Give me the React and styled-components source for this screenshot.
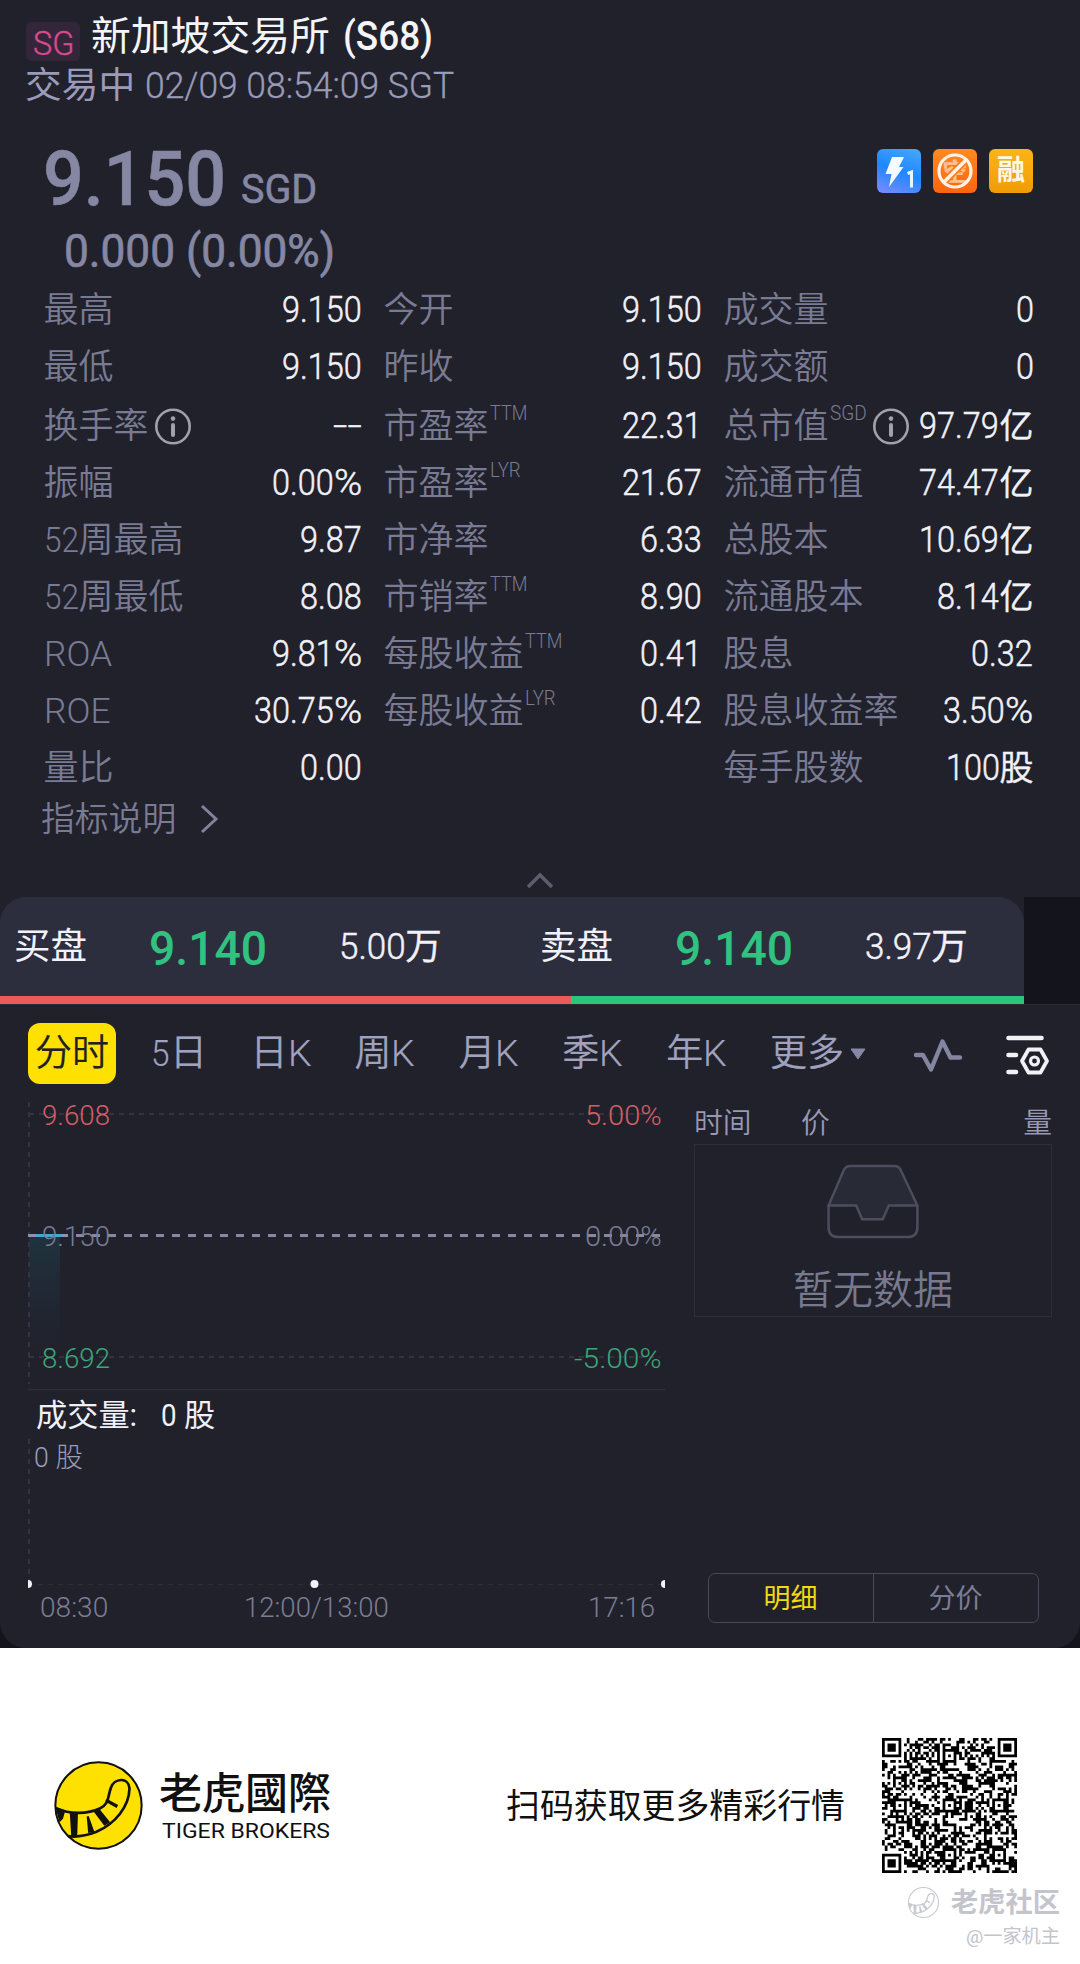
import React, { useLayoutEffect, useRef, useState } from 'react'
import styled, { createGlobalStyle } from 'styled-components'

const GlobalStyle = createGlobalStyle`
  * { box-sizing: border-box; }
  body {
    margin: 0;
    background: #ffffff;
    font-family: Roboto, 'Noto Sans CJK SC', sans-serif;
  }
`

/* ---------- narrow figures ---------- */

const NarrowBox = styled.span`
  display: inline-block;
  white-space: pre;
`
const NarrowInner = styled.span`
  display: inline-block;
  transform-origin: 0 50%;
`

// squeezes text horizontally, by a factor (k) or to a width (w)
const Narrow = ({ k = 0.9, w, className, children }) => {
  const ref = useRef(null)
  const [natural, setNatural] = useState(0)
  useLayoutEffect(() => {
    setNatural(ref.current.offsetWidth)
  }, [children])
  const width = w || natural * k
  const scale = natural ? width / natural : 1
  return (
    <NarrowBox className={className} style={{ width: natural ? width : undefined }}>
      <NarrowInner ref={ref} style={{ transform: `scaleX(${scale})` }}>{children}</NarrowInner>
    </NarrowBox>
  )
}

const factor = part => {
  if (part === '%') return 1.06
  if (part === '--') return 1.4
  if (/[A-Z]/.test(part)) return 1.01
  return 0.9
}

// figures get narrowed, chinese characters stay as they are
const Mixed = ({ text }) =>
  text.split(/(%|[\x20-\x24\x26-\x7e]+)/).filter(Boolean).map((part, i) =>
    /^[\x20-\x7e]+$/.test(part)
      ? <Narrow key={i} k={factor(part)}>{part}</Narrow>
      : <Han key={i}>{part}</Han>
  )

const Han = styled.span``

/* ---------- page ---------- */

const Page = styled.div`
  width: 1080px;
  height: 1964px;
  display: flex;
  flex-direction: column;
  background: #ffffff;
  overflow: hidden;
`
const Dark = styled.div`
  height: 1648px;
  background: #14141d;
`
const Summary = styled.section`
  height: 897px;
  padding-top: 17px;
  background: #21212b;
`
const TitleRow = styled.div`
  height: 40px;
  padding-left: 26px;
  display: flex;
  align-items: center;
  color: #f4f4f9;
  font-size: 39.8px;
  line-height: 40px;
  white-space: pre;
`
const Market = styled.div`
  width: 54px;
  height: 39px;
  margin: 8px 11px 0 0;
  padding-top: 3px;
  border-radius: 5px;
  background: #33253a;
  color: #d74c8a;
  font-size: 34px;
  font-weight: 300;
  -webkit-text-stroke: 0.4px;
  line-height: 37px;
  text-align: center;
`
const Symbol = styled(Narrow)`
  margin-left: 13px;
  font-weight: 500;
`
const Status = styled.div`
  height: 40px;
  margin-top: 8px;
  padding-left: 25px;
  color: #999bb9;
  font-size: 36.7px;
  line-height: 40px;
`
const Clock = styled(Narrow)`
  margin-left: 10px;
  font-size: 37.5px;
  font-weight: 300;
  -webkit-text-stroke: 0.3px;
`
const PriceRow = styled.div`
  height: 76px;
  margin-top: 36px;
  padding: 0 47px 0 43px;
  display: flex;
  justify-content: space-between;
  align-items: flex-start;
`
const Price = styled.div`
  display: flex;
  align-items: baseline;
  gap: 15px;
  color: #8587a3;
  font-size: 76px;
  line-height: 76px;
  font-weight: 500;
  -webkit-text-stroke: 0.6px;
`
const Currency = styled(Narrow)`
  font-size: 40px;
  font-weight: 400;
  transform: translateY(-2px);
`
const Badges = styled.div`
  display: flex;
  gap: 12px;
  margin-top: 8px;
`
const Badge = styled.div`
  width: 44px;
  height: 44px;
  border-radius: 6px;
  display: flex;
  align-items: center;
  justify-content: center;
  background: ${p => p.$bg};
  color: #fff8e6;
  font-size: 28px;
  font-weight: 600;
  line-height: 46px;
`
const Change = styled.div`
  height: 46px;
  margin-top: 11px;
  padding-left: 64px;
  color: #8587a3;
  font-size: 46px;
  font-weight: 400;
  -webkit-text-stroke: 0.7px;
  line-height: 46px;
`

/* ---------- indicators ---------- */

const Stats = styled.div`
  display: grid;
  grid-template-columns: 319px 319px 310px;
  column-gap: 21px;
  grid-auto-rows: 57px;
  margin: 8px 0 0 43.5px;
`
const Stat = styled.div`
  display: flex;
  justify-content: space-between;
  align-items: center;
  line-height: 57px;
  white-space: nowrap;
  transform: translateY(${p => (p.$row > 1 ? 2 : 0)}px);
`
const Label = styled.div`
  display: flex;
  align-items: center;
  color: #797b94;
  font-size: 35px;
  font-weight: 300;
  height: 57px;

  ${Han} {
    font-weight: 350;
  }
`
const Sup = styled(Narrow)`
  margin-left: 1px;
  font-size: 20.5px;
  line-height: 24px;
  margin-bottom: 27px;
`
const Value = styled.div`
  color: #f1f1f8;
  font-size: 36px;
  font-weight: 300;
  -webkit-text-stroke: 0.5px;
  line-height: 57px;

  ${Han} {
    font-size: 34px;
    font-weight: 350;
  }
`
const InfoIcon = styled.svg`
  width: 38px;
  height: 38px;
  margin-left: 5px;
  flex: none;
`
const Explain = styled.div`
  height: 46px;
  margin-top: 2px;
  padding-left: 41px;
  display: flex;
  align-items: center;
  gap: 23px;
  color: #797b94;
  font-size: 33.8px;
  font-weight: 350;
  line-height: 48px;

  svg {
    margin-bottom: 2px;
  }
`
const Fold = styled.div`
  display: flex;
  justify-content: center;
  margin-top: 29px;
`

/* ---------- bid / ask ---------- */

const Quote = styled.section`
  width: 1024px;
  height: 107px;
  background: #21212b;
`
const QuoteInner = styled.div`
  height: 99px;
  display: grid;
  grid-template-columns: 526px 498px;
  background: #2c2e3d;
  border-radius: 26px 26px 0 0;
`
const Side = styled.div`
  padding-left: 14px;
  display: grid;
  grid-template-columns: 135px 190px 1fr;
  line-height: 99px;
  color: #f1f1f8;
  font-size: 36.5px;
`
const SidePrice = styled.div`
  color: #31c280;
  font-size: 49px;
  font-weight: 500;
  line-height: 104px;
`
const SideVolume = styled.div`
  font-weight: 300;
  -webkit-text-stroke: 0.5px;

  ${Han} {
    font-weight: 350;
  }
`
const Ratio = styled.div`
  height: 8px;
  display: flex;
  background: #2bc57b;

  div {
    width: 571px;
    background: #ec5b5b;
  }
`

/* ---------- chart panel ---------- */

const Panel = styled.section`
  height: 644px;
  background: #21212b;
  border-top: 1px solid #2a2a35;
  border-radius: 0 0 26px 26px;
`
const Tabs = styled.div`
  height: 97px;
  padding-left: 28px;
  display: flex;
  align-items: center;
`
const Tab = styled.div`
  height: 61px;
  margin-right: ${p => (p.$active ? 35 : 43.7)}px;
  padding: ${p => (p.$active ? '0 7px' : 0)};
  border-radius: 12px;
  background: ${p => (p.$active ? '#ffe100' : 'transparent')};
  color: ${p => (p.$active ? '#1f1f24' : '#a0a2bf')};
  font-size: 37px;
  font-weight: 350;
  -webkit-text-stroke: 0.2px;
  line-height: 61px;
  white-space: nowrap;
`
const More = styled(Tab)`
  display: flex;
  align-items: center;
  gap: 6px;
  margin-right: 47px;
`
const Tools = styled.div`
  display: flex;
  align-items: center;
  gap: 42px;
  padding-top: 2px;
`
const Body = styled.div`
  display: flex;
  height: 546px;
`
const ChartArea = styled.div`
  position: relative;
  width: 665px;
  height: 546px;
`
const Lines = styled.svg`
  display: block;
`
// axis labels lie over the plot
const AxisLabel = styled.div`
  position: absolute;
  top: ${p => p.$y - 1117}px;
  ${p => (p.$right ? `right: ${665 - p.$right}px;` : `left: ${p.$x}px;`)}
  color: ${p => p.$color};
  font-size: ${p => p.$size || 28.5}px;
  font-weight: ${p => p.$weight || 300};
  line-height: 32px;
  white-space: pre;
`
const Ticks = styled.div`
  width: 358px;
  margin-left: 29px;
`
const TicksHead = styled.div`
  height: 42px;
  display: grid;
  grid-template-columns: 107px 1fr auto;
  color: #9799b5;
  font-size: 28.8px;
  font-weight: 350;
  line-height: 43px;
`
const Empty = styled.div`
  height: 173px;
  padding-top: 19px;
  border: 1px solid #2d2e39;
  display: flex;
  flex-direction: column;
  align-items: center;
  color: #77798f;
  font-size: 40px;
  font-weight: 350;
  line-height: 50px;

  svg {
    margin-bottom: 27px;
  }
`
const Switch = styled.div`
  width: 331px;
  height: 50px;
  margin: 256px 0 0 13.5px;
  display: flex;
  border: 1px solid #47485b;
  border-radius: 7px;
`
const SwitchItem = styled.div`
  flex: 1;
  text-align: center;
  color: ${p => (p.$active ? '#f3da12' : '#7b7d96')};
  font-size: 27px;
  line-height: 51px;

  & + & {
    border-left: 1px solid #47485b;
  }
`

/* ---------- footer ---------- */

const Footer = styled.footer`
  height: 316px;
  padding: 90px 63px 0 54px;
  background: #ffffff;
`
const FooterRow = styled.div`
  height: 135px;
  display: flex;
  align-items: center;
  color: #101010;
`
const Brand = styled.div`
  width: 347px;
  margin-left: 16px;
  padding-top: 2px;
  font-family: Roboto, 'Noto Sans CJK TC', sans-serif;

  b {
    display: block;
    font-size: 43px;
    font-weight: 500;
    line-height: 48px;
  }
`
const BrandSub = styled.div`
  font-size: 20.5px;
  line-height: 26px;
  margin-left: 3px;
`
const Slogan = styled.div`
  flex: 1;
  padding-top: 2px;
  font-size: 33.9px;
  line-height: 40px;
`
const Watermark = styled.div`
  display: flex;
  flex-direction: column;
  align-items: flex-end;
  margin: 11px -43px 0 0;
  color: #c3c4cc;
  font-size: 19.2px;
  line-height: 32px;
`
const WatermarkRow = styled.div`
  display: flex;
  align-items: center;
  gap: 12px;
  height: 37px;
  font-size: 27.3px;
  font-weight: 600;
`

/* ---------- drawings ---------- */

const Info = () => (
  <InfoIcon viewBox="0 0 38 38" fill="none">
    <circle cx="19" cy="18.500" r="16.7" stroke="#a1a1ac" strokeWidth="2.6" />
    <circle cx="19" cy="10.600" r="2.3" fill="#a1a1ac" />
    <path d="M19 17V27" stroke="#a1a1ac" strokeWidth="4" strokeLinecap="round" />
  </InfoIcon>
)

const Bolt = () => (
  <svg width="44" height="44" viewBox="0 0 44 44">
    <path d="M15 8H27L22 18H26.500L12 38L14.500 25H8.500Z" fill="#f2fbff" />
    <path d="M30.500 24.500L34.500 23V38.500" fill="none" stroke="#e8f4ff" strokeWidth="3" />
  </svg>
)

const NoShort = () => (
  <svg width="44" height="44" viewBox="0 0 44 44">
    <text x="22" y="31.500" textAnchor="middle" fontSize="25" fontWeight="700" fill="#ffc08f">空</text>
    <path d="M10.500 33.500L33.500 10.500" stroke="#ff7a1c" strokeWidth="7" />
    <circle cx="22" cy="22" r="16" fill="none" stroke="#fff3e8" strokeWidth="3.200" />
    <path d="M11 33L33 11" stroke="#fff3e8" strokeWidth="3.600" />
  </svg>
)

const TigerTail = ({ size, ring = '#111', fill = '#ffe100', line = 6 }) => (
  <svg width={size} height={size} viewBox="74 64 264 264" fill="none" stroke={ring} strokeWidth={line}>
    <circle cx="206" cy="196" r="128" fill={fill} />
    <path d="M80 205C120 222 175 222 210 205C240 190 232 170 243 143C252 115 295 110 298 145C297 200 255 250 200 274C170 286 140 290 116 287" strokeWidth={line + 2} />
    <path d="M82 204L104 212L98 234L92 240Z" fill={ring} />
    <path d="M124 221H142L140 285H128Z" fill={ring} />
    <path d="M174 228L190 272L178 274Z" fill={ring} />
    <path d="M194 212L206 208L236 245L224 252Z" fill={ring} />
    <path d="M228 180L262 199" strokeWidth={line + 4} />
  </svg>
)

const N = 49
const inFinder = (x, y) => {
  const hit = (cx, cy) => x >= cx && x < cx + 7 && y >= cy && y < cy + 7 ? [x - cx, y - cy] : null
  return hit(0, 0) || hit(N - 7, 0) || hit(0, N - 7)
}
const isQuiet = (x, y) => (x < 8 && y < 8) || (x > N - 9 && y < 8) || (x < 8 && y > N - 9)
const aligns = [[24, 6], [6, 24], [24, 24], [42, 24], [24, 42], [42, 42]]
const isDark = (x, y) => {
  const f = inFinder(x, y)
  if (f) {
    const d = Math.max(Math.abs(f[0] - 3), Math.abs(f[1] - 3))
    return d !== 2
  }
  if (isQuiet(x, y)) return false
  for (const [ax, ay] of aligns) {
    const d = Math.max(Math.abs(x - ax), Math.abs(y - ay))
    if (d <= 2) return d !== 1
  }
  if (x === 6 || y === 6) return (x + y) % 2 === 0
  let h = (x * 374761393 + y * 668265263) | 0
  h = Math.imul(h ^ (h >>> 13), 1274126177)
  return ((h ^ (h >>> 16)) & 255) < 134
}
const qrPath = (() => {
  let d = ''
  for (let y = 0; y < N; y++) {
    for (let x = 0; x < N; x++) if (isDark(x, y)) d += `M${x} ${y}h1v1h-1z`
  }
  return d
})()

const QrCode = () => (
  <svg width="135" height="135" viewBox="0 0 49 49">
    <path d={qrPath} fill="#000" />
  </svg>
)

/* ---------- data ---------- */

const stats = [
  ['最高', '9.150'], ['今开', '9.150'], ['成交量', '0'],
  ['最低', '9.150'], ['昨收', '9.150'], ['成交额', '0'],
  ['换手率', '--', '', true], ['市盈率', '22.31', 'TTM'], ['总市值', '97.79亿', 'SGD', true],
  ['振幅', '0.00%'], ['市盈率', '21.67', 'LYR'], ['流通市值', '74.47亿'],
  ['52周最高', '9.87'], ['市净率', '6.33'], ['总股本', '10.69亿'],
  ['52周最低', '8.08'], ['市销率', '8.90', 'TTM'], ['流通股本', '8.14亿'],
  ['ROA', '9.81%'], ['每股收益', '0.41', 'TTM'], ['股息', '0.32'],
  ['ROE', '30.75%'], ['每股收益', '0.42', 'LYR'], ['股息收益率', '3.50%'],
  ['量比', '0.00'], ['', ''], ['每手股数', '100股'],
]
const tabs = ['5日', '日K', '周K', '月K', '季K', '年K']
const sides = [
  ['买盘', '9.140', '5.00万'],
  ['卖盘', '9.140', '3.97万'],
]
const supWidth = { TTM: 37, LYR: 31, SGD: 37 }
const red = '#d35f66'
const green = '#3aa679'
const grey = '#7b7d94'

const Chart = () => (
  <ChartArea>
    <Lines width="665" height="546" viewBox="0 1102 665 546" fill="none">
      <defs>
        <linearGradient id="fill" x1="0" y1="0" x2="0" y2="1">
          <stop offset="0" stopColor="#1e3c48" stopOpacity="0.65" />
          <stop offset="1" stopColor="#1e3040" stopOpacity="0" />
        </linearGradient>
      </defs>
      <rect x="29" y="1237" width="31" height="120" fill="url(#fill)" />
      <g stroke="#33343f" strokeWidth="2" strokeDasharray="5 5">
        <path d="M29 1102V1384" />
        <path d="M29 1114H660" />
        <path d="M29 1357H660" />
        <path d="M29 1439V1582" />
      </g>
      <path d="M28 1584.500H665" stroke="#2c2d38" strokeWidth="1" strokeDasharray="5 5" />
      <path d="M28 1389.500H665" stroke="#2e2f3a" strokeWidth="1.500" />
      <path d="M28 1235.500H68" stroke="#9092ad" strokeWidth="3" />
      <path d="M76 1235.500H660" stroke="#8688a4" strokeWidth="3" strokeDasharray="8 8" />
      <path d="M36 1235.500H62" stroke="#3fa9cf" strokeWidth="3" />
      <path d="M28 1580A4 4 0 0 1 28 1588Z" fill="#f1f1f8" />
      <circle cx="314.500" cy="1584" r="4" fill="#f1f1f8" />
      <path d="M665 1580A4 4 0 0 0 665 1588Z" fill="#f1f1f8" />
    </Lines>
    <AxisLabel $x={42} $y={1115} $color={red}><Narrow w={68}>9.608</Narrow></AxisLabel>
    <AxisLabel $x={42} $y={1236} $color={grey}><Narrow w={68}>9.150</Narrow></AxisLabel>
    <AxisLabel $x={42} $y={1358} $color={green}><Narrow w={68}>8.692</Narrow></AxisLabel>
    <AxisLabel $right={661} $y={1115} $color={red}><Narrow w={76.5}>5.00%</Narrow></AxisLabel>
    <AxisLabel $right={661} $y={1236} $color={grey}><Narrow w={76.5}>0.00%</Narrow></AxisLabel>
    <AxisLabel $right={661} $y={1358} $color={green}><Narrow w={87}>-5.00%</Narrow></AxisLabel>
    <AxisLabel $x={36} $y={1415} $size={31.2} $weight={380} $color="#f0f0f6">
      成交量<Narrow w={8}>:</Narrow><Narrow w={23}>{'   '}</Narrow><Narrow w={16}>0</Narrow><Narrow w={7.5}>{' '}</Narrow>股
    </AxisLabel>
    <AxisLabel $x={33.5} $y={1457} $size={27.5} $color="#9c9eb8"><Narrow w={14.5}>0</Narrow><Narrow w={7.5}>{' '}</Narrow>股</AxisLabel>
    <AxisLabel $x={40} $y={1607} $color={grey}><Narrow w={68}>08:30</Narrow></AxisLabel>
    <AxisLabel $x={244} $y={1607} $color={grey}><Narrow w={145}>12:00/13:00</Narrow></AxisLabel>
    <AxisLabel $right={655} $y={1607} $color={grey}><Narrow w={67}>17:16</Narrow></AxisLabel>
  </ChartArea>
)

export default function App() {
  return (
    <Page>
      <GlobalStyle />
      <Dark>
        <Summary>
          <TitleRow>
            <Market><Narrow w={41}>SG</Narrow></Market>
            新加坡交易所
            <Symbol w={90}>(S68)</Symbol>
          </TitleRow>
          <Status>交易中<Clock w={309}>02/09 08:54:09 SGT</Clock></Status>
          <PriceRow>
            <Price>
              <Narrow w={183}>9.150</Narrow>
              <Currency w={76}>SGD</Currency>
            </Price>
            <Badges>
              <Badge $bg="linear-gradient(200deg, #48a9fb 0%, #1f87ff 50%, #7b8cff 100%)"><Bolt /></Badge>
              <Badge $bg="linear-gradient(#ff8a22, #ff6410)"><NoShort /></Badge>
              <Badge $bg="linear-gradient(#fbb516, #f09c06)">融</Badge>
            </Badges>
          </PriceRow>
          <Change><Narrow w={271}>0.000 (0.00%)</Narrow></Change>
          <Stats>
            {stats.map(([label, value, sup, info], i) => (
              <Stat key={i} $row={Math.floor(i / 3)}>
                <Label>
                  <div><Mixed text={label} /></div>
                  {sup && <Sup w={supWidth[sup]}>{sup}</Sup>}
                  {info && <Info />}
                </Label>
                <Value><Mixed text={value} /></Value>
              </Stat>
            ))}
          </Stats>
          <Explain>
            指标说明
            <svg width="20" height="30" viewBox="0 0 20 30" fill="none">
              <path d="M3 2L17 15L3 28" stroke="#81839a" strokeWidth="3" />
            </svg>
          </Explain>
          <Fold>
            <svg width="28" height="18" viewBox="0 0 28 18" fill="none">
              <path d="M2 15L14 3L26 15" stroke="#5c5d6e" strokeWidth="3.500" />
            </svg>
          </Fold>
        </Summary>
        <Quote>
          <QuoteInner>
            {sides.map(([name, price, volume]) => (
              <Side key={name}>
                <div>{name}</div>
                <SidePrice><Narrow w={118}>{price}</Narrow></SidePrice>
                <SideVolume><Narrow k={0.96}>{volume.slice(0, -1)}</Narrow><Han>{volume.slice(-1)}</Han></SideVolume>
              </Side>
            ))}
          </QuoteInner>
          <Ratio><div /></Ratio>
        </Quote>
        <Panel>
          <Tabs>
            <Tab $active>分时</Tab>
            {tabs.map(t => <Tab key={t}><Mixed text={t} /></Tab>)}
            <More>
              更多
              <svg width="16" height="12" viewBox="0 0 16 12"><path d="M1 1H15L8 11Z" fill="#8688a4" stroke="#8688a4" strokeLinejoin="round" /></svg>
            </More>
            <Tools>
              <svg width="50" height="36" viewBox="0 0 50 36" fill="none">
                <path d="M3 18H10L18 32.500L29.500 4.500L37.500 20.500H47" stroke="#8385a1" strokeWidth="4.400" strokeLinecap="round" strokeLinejoin="round" />
              </svg>
              <svg width="46" height="42" viewBox="0 0 46 42" fill="none" stroke="#f1f1f6" strokeLinecap="round">
                <path d="M3.500 4H36.500M3.500 21H11M3.500 38H11" strokeWidth="4.600" />
                <path d="M23.500 15.500H35.500L42 27L35.500 38.500H23.500L17 27Z" strokeWidth="3.800" strokeLinejoin="round" />
                <circle cx="29.500" cy="27" r="4" strokeWidth="3.200" />
              </svg>
            </Tools>
          </Tabs>
          <Body>
            <Chart />
            <Ticks>
              <TicksHead>
                <div>时间</div>
                <div>价</div>
                <div>量</div>
              </TicksHead>
              <Empty>
                <svg width="94" height="76" viewBox="0 0 94 76" fill="none" stroke="#4c4d5f" strokeWidth="2.500">
                  <path d="M2 42L17 7Q19 2 24 2H69Q73 2 75 6L92 42H63L57 56H36L30 42Z" fill="#282a36" />
                  <path d="M2 42V64Q2 74 12 74H82Q92 74 92 64V42" />
                </svg>
                暂无数据
              </Empty>
              <Switch>
                <SwitchItem $active>明细</SwitchItem>
                <SwitchItem>分价</SwitchItem>
              </Switch>
            </Ticks>
          </Body>
        </Panel>
      </Dark>
      <Footer>
        <FooterRow>
          <TigerTail size={89} />
          <Brand>
            <b>老虎國際</b>
            <BrandSub><Narrow w={168}>TIGER BROKERS</Narrow></BrandSub>
          </Brand>
          <Slogan>扫码获取更多精彩行情</Slogan>
          <QrCode />
        </FooterRow>
        <Watermark>
          <WatermarkRow>
            <TigerTail size={31} ring="#c9cad1" fill="none" line={9} />
            老虎社区
          </WatermarkRow>
          @一家机主
        </Watermark>
      </Footer>
    </Page>
  )
}
